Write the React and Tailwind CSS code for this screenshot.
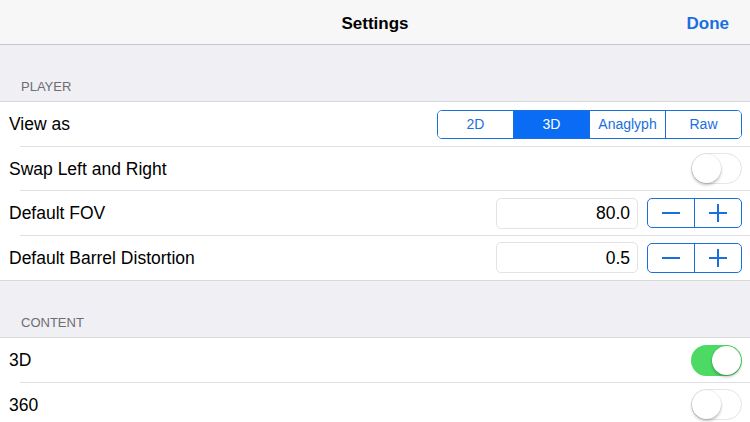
import { useState } from "react";

const font = { fontFamily: '"Liberation Sans", Arial, sans-serif' };

function Toggle({ on }) {
  return (
    <div
      className={`relative h-[31px] w-[51px] rounded-full ${
        on ? "bg-[#4cd964]" : "border border-[#e5e5ea] bg-white"
      }`}
    >
      <div
        className={`absolute h-[29px] w-[29px] rounded-full bg-white shadow-[0_2px_3px_rgba(0,0,0,0.25),0_0_0_0.5px_rgba(0,0,0,0.08)] ${
          on ? "right-[1px] top-[1px]" : "left-0 top-0"
        }`}
      />
    </div>
  );
}

function Stepper() {
  return (
    <div className="flex h-[30px] w-[95px] overflow-hidden rounded-[5px] border border-[#1a6fe0]">
      <div className="flex flex-1 items-center justify-center border-r border-[#1a6fe0]">
        <div className="h-[2px] w-[18px] bg-[#1a6fe0]" />
      </div>
      <div className="relative flex flex-1 items-center justify-center">
        <div className="h-[2px] w-[18px] bg-[#1a6fe0]" />
        <div className="absolute h-[18px] w-[2px] bg-[#1a6fe0]" />
      </div>
    </div>
  );
}

function Row({ label, children, last }) {
  return (
    <div className="relative flex h-[44.5px] items-center bg-white pl-[9px] pr-[8px]">
      <span className="flex-1 text-[17.5px] text-black">{label}</span>
      {children}
      {!last && <div className="absolute bottom-0 left-[20px] right-0 h-px bg-[#e0e0e5]" />}
    </div>
  );
}

function Header({ title }) {
  return (
    <div className="flex h-[56px] items-end bg-[#efeff4] pb-[5px] pl-[21px] text-[13px] text-[#6d6d72]">
      {title}
    </div>
  );
}

function ValueBox({ value }) {
  return (
    <div className="mr-[9px] flex h-[31px] w-[142px] items-center justify-end rounded-[5px] border border-[#e3e3e6] pr-[7px] text-[17.5px] text-black">
      {value}
    </div>
  );
}

export default function App() {
  const [view, setView] = useState("3D");
  const segs = ["2D", "3D", "Anaglyph", "Raw"];
  return (
    <div style={font} className="h-[422px] w-[750px] overflow-hidden bg-[#efeff4]">
      <div className="relative flex h-[45px] items-center justify-center border-b border-[#c8c7cc] bg-[#f7f7f7] pt-[3px]">
        <span className="text-[17px] font-semibold text-black">Settings</span>
        <span className="absolute right-[21px] text-[17px] font-semibold text-[#1a6fe0]">Done</span>
      </div>
      <Header title="PLAYER" />
      <div className="border-y border-[#d8d8dd]">
        <Row label="View as">
          <div className="flex h-[29px] w-[305px] overflow-hidden rounded-[5px] border border-[#1a6fe0]">
            {segs.map((s, i) => (
              <button
                key={s}
                onClick={() => setView(s)}
                className={`flex flex-1 items-center justify-center text-[14px] ${
                  i > 0 ? "border-l border-[#1a6fe0]" : ""
                } ${view === s ? "bg-[#0a6cf5] text-white" : "bg-white text-[#1a6fe0]"}`}
              >
                {s}
              </button>
            ))}
          </div>
        </Row>
        <Row label="Swap Left and Right">
          <Toggle on={false} />
        </Row>
        <Row label="Default FOV">
          <ValueBox value="80.0" />
          <Stepper />
        </Row>
        <Row label="Default Barrel Distortion" last>
          <ValueBox value="0.5" />
          <Stepper />
        </Row>
      </div>
      <Header title="CONTENT" />
      <div className="border-t border-[#d8d8dd]">
        <Row label="3D">
          <Toggle on />
        </Row>
        <Row label="360">
          <Toggle on={false} />
        </Row>
      </div>
    </div>
  );
}
